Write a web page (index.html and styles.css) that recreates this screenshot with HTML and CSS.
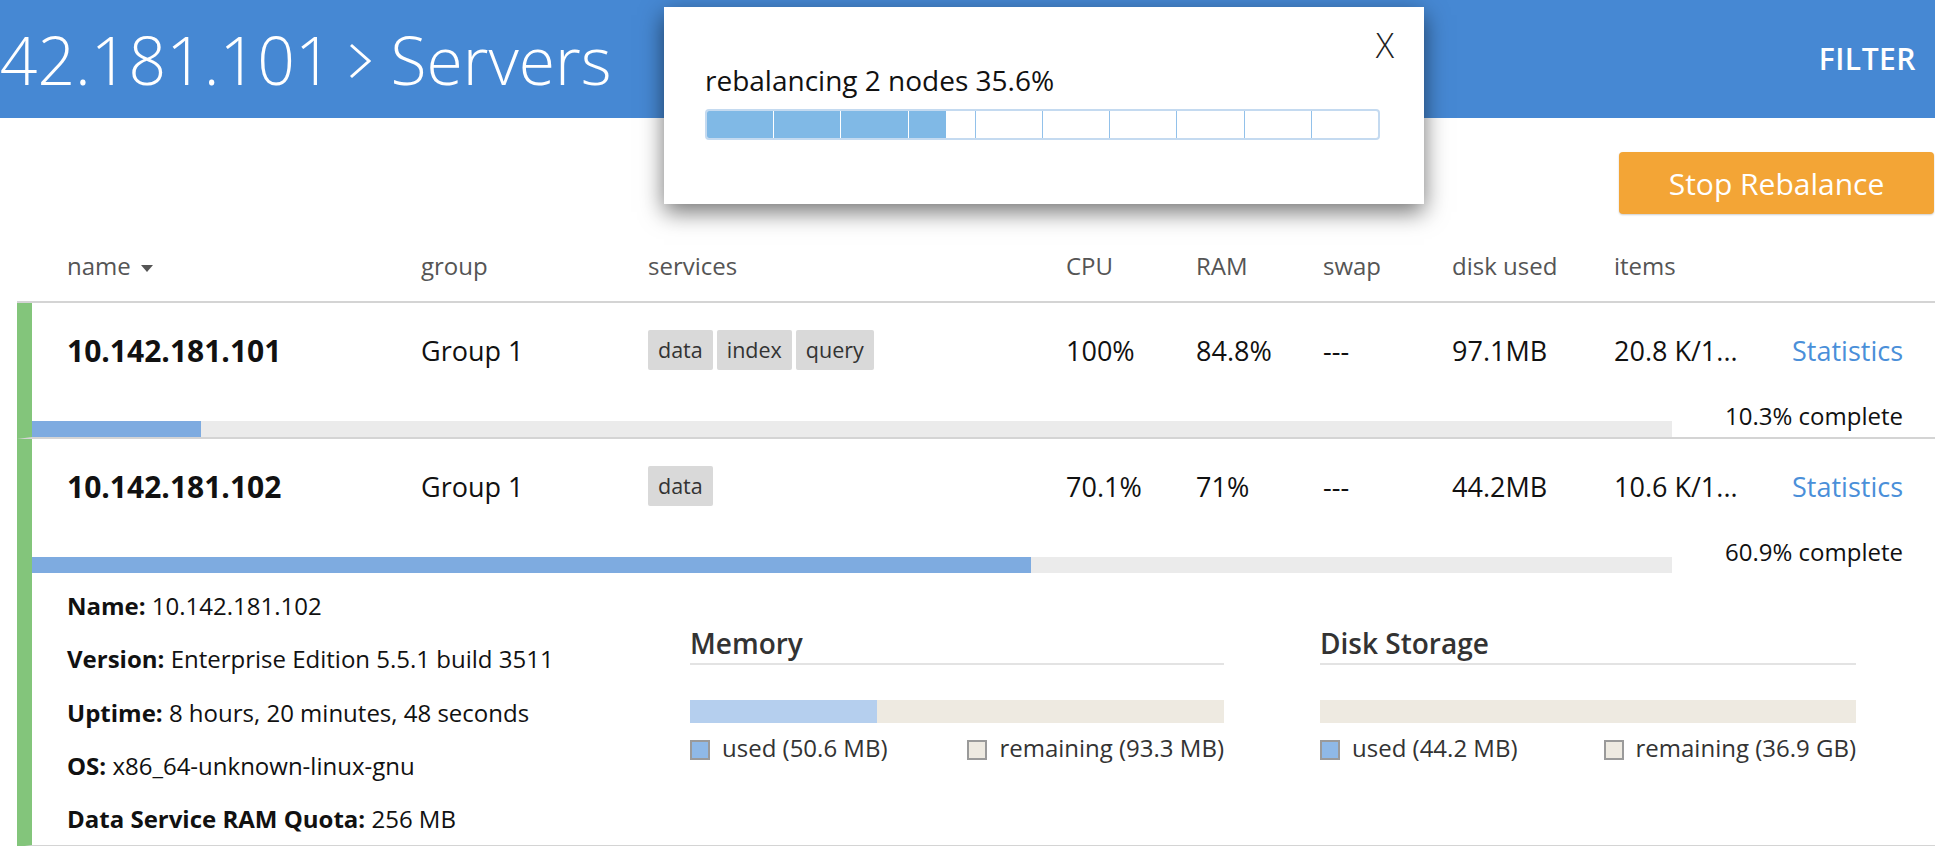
FILE: index.html
```html
<!DOCTYPE html>
<html lang="en">
<head>
<meta charset="utf-8">
<title>Servers</title>
<link rel="stylesheet" href="styles.css">
</head>
<body>
<header class="topbar">
  <h1 class="title">10.142.181.101<svg class="chev" width="22" height="36" viewBox="0 0 22 36"><polyline points="2,2 20,18 2,34" fill="none" stroke="#fff" stroke-width="3"/></svg>Servers</h1>
  <a class="filter">FILTER</a>
</header>

<div class="modal">
  <div class="modal-close">X</div>
  <div class="modal-msg">rebalancing 2 nodes 35.6%</div>
  <div class="seg-bar">
    <div class="seg full"></div>
    <div class="seg full"></div>
    <div class="seg full"></div>
    <div class="seg part" style="background:linear-gradient(90deg,#80b9e6 56%,#ffffff 56%)"></div>
    <div class="seg"></div>
    <div class="seg"></div>
    <div class="seg"></div>
    <div class="seg"></div>
    <div class="seg"></div>
    <div class="seg"></div>
  </div>
</div>

<main class="content">
  <div class="toolbar">
    <button class="btn-stop">Stop Rebalance</button>
  </div>

  <div class="thead cols">
    <div class="th">name <svg class="sort" width="12" height="7" viewBox="0 0 12 7"><polygon points="0,0 12,0 6,7" fill="#555"/></svg></div>
    <div class="th">group</div>
    <div class="th">services</div>
    <div class="th">CPU</div>
    <div class="th">RAM</div>
    <div class="th">swap</div>
    <div class="th">disk used</div>
    <div class="th">items</div>
    <div class="th"></div>
  </div>

  <div class="row">
    <div class="row-main cols">
      <div class="name">10.142.181.101</div>
      <div>Group 1</div>
      <div class="chips"><span class="chip">data</span><span class="chip">index</span><span class="chip">query</span></div>
      <div>100%</div>
      <div>84.8%</div>
      <div>---</div>
      <div>97.1MB</div>
      <div>20.8 K/1...</div>
      <div class="stat-link">Statistics</div>
    </div>
    <div class="progress">
      <div class="track"><div class="fill" style="width:10.3%"></div></div>
      <div class="pct">10.3% complete</div>
    </div>
  </div>

  <div class="row">
    <div class="row-main cols">
      <div class="name">10.142.181.102</div>
      <div>Group 1</div>
      <div class="chips"><span class="chip">data</span></div>
      <div>70.1%</div>
      <div>71%</div>
      <div>---</div>
      <div>44.2MB</div>
      <div>10.6 K/1...</div>
      <div class="stat-link">Statistics</div>
    </div>
    <div class="progress">
      <div class="track"><div class="fill" style="width:60.9%"></div></div>
      <div class="pct">60.9% complete</div>
    </div>
    <div class="details">
      <div class="info">
        <p><b>Name:</b> 10.142.181.102</p>
        <p><b>Version:</b> Enterprise Edition 5.5.1 build 3511</p>
        <p><b>Uptime:</b> 8 hours, 20 minutes, 48 seconds</p>
        <p><b>OS:</b> x86_64-unknown-linux-gnu</p>
        <p><b>Data Service RAM Quota:</b> 256 MB</p>
      </div>
      <div class="panel">
        <h3>Memory</h3>
        <div class="meter"><div class="meter-used" style="width:35.1%"></div></div>
        <div class="legend">
          <span><i class="sw sw-used"></i>used (50.6 MB)</span>
          <span><i class="sw sw-rem"></i>remaining (93.3 MB)</span>
        </div>
      </div>
      <div class="panel">
        <h3>Disk Storage</h3>
        <div class="meter"><div class="meter-used" style="width:0%"></div></div>
        <div class="legend">
          <span><i class="sw sw-used"></i>used (44.2 MB)</span>
          <span><i class="sw sw-rem"></i>remaining (36.9 GB)</span>
        </div>
      </div>
    </div>
  </div>
</main>
</body>
</html>
```

FILE: styles.css
```css
* { box-sizing: border-box; }
html, body { margin: 0; padding: 0; }
body {
  font-family: "Open Sans", "Liberation Sans", sans-serif;
  color: #111;
  background: #fff;
  width: 1935px;
  height: 846px;
  overflow: hidden;
  position: relative;
}

.topbar {
  height: 118px;
  background: #4688d3;
  display: flex;
  align-items: center;
  justify-content: space-between;
  overflow: hidden;
  color: #fff;
}
.title {
  margin: 0 0 0 -129px;
  font-size: 66px;
  font-weight: 300;
  line-height: 64px;
  white-space: nowrap;
  display: flex;
  align-items: center;
}
.chev {
  margin: 4px 20px 0 16px;
}
.filter {
  font-size: 30px;
  font-weight: 600;
  line-height: 30px;
  margin-right: 19px;
  letter-spacing: 0.5px;
}

.modal {
  position: absolute;
  left: 664px;
  top: 7px;
  width: 760px;
  height: 197px;
  background: #fff;
  box-shadow: 0 8px 22px rgba(0, 0, 0, 0.55);
  padding: 20px 30px 0 41px;
  z-index: 5;
}
.modal-close {
  text-align: right;
  font-size: 34px;
  font-weight: 300;
  line-height: 36px;
  color: #222;
}
.modal-msg {
  font-size: 28px;
  line-height: 38px;
  color: #111;
  margin-top: -2px;
}
.seg-bar {
  margin-top: 10px;
  margin-right: 14px;
  height: 31px;
  border: 2px solid #c4daf0;
  border-radius: 4px;
  display: flex;
  overflow: hidden;
}
.seg { flex: 1; border-right: 1px solid #92c1ea; }
.seg:last-child { border-right: 0; }
.seg.full { background: #80b9e6; border-right-color: #fff; }

.content { padding-left: 17px; }
.toolbar {
  display: flex;
  justify-content: flex-end;
  padding-top: 34px;
  padding-right: 1px;
}
.btn-stop {
  height: 62px;
  width: 315px;
  background: #f3a536;
  color: #fff;
  border: 0;
  border-radius: 4px;
  font-family: inherit;
  font-size: 30px;
  font-weight: 400;
  box-shadow: 0 1px 2px rgba(0, 0, 0, 0.2);
}

.cols {
  display: grid;
  grid-template-columns: 354px 227px 418px 130px 127px 129px 162px 176px auto;
  align-items: center;
}
.thead {
  padding: 35px 32px 18px 50px;
  line-height: 34px;
  font-size: 24px;
  color: #555;
  border-bottom: 2px solid #d4d4d4;
}
.th { white-space: nowrap; }
.sort { margin-left: 4px; vertical-align: 3px; }

.row {
  border-left: 15px solid #83c57b;
  border-bottom: 2px solid #d4d4d4;
}
.row-main {
  height: 94px;
  padding: 0 32px 0 35px;
  font-size: 27px;
  white-space: nowrap;
}
.name { font-weight: 700; font-size: 30px; }
.chips { display: flex; gap: 4px; }
.chip {
  background: #d9d9d9;
  height: 40px;
  line-height: 40px;
  padding: 0 10px;
  font-size: 21.5px;
  color: #333;
  border-radius: 2px;
}
.stat-link { color: #4a8fd9; text-align: right; }

.progress {
  display: flex;
  align-items: flex-end;
  height: 40px;
}
.track { flex: 1; height: 16px; background: #ebebeb; }
.fill { height: 100%; background: #7eabe0; }
.pct {
  width: 263px;
  text-align: right;
  padding: 0 32px 5px 0;
  font-size: 24px;
  line-height: 32px;
}

.details {
  display: grid;
  grid-template-columns: 527px 534px 536px;
  column-gap: 96px;
  padding: 6px 0 0 35px;
}
.info p {
  margin: 0;
  font-size: 24px;
  line-height: 53.25px;
  white-space: nowrap;
}
.info b { font-weight: 700; }
.panel { padding-top: 44px; }
.panel h3 {
  margin: 0;
  font-size: 28px;
  font-weight: 600;
  line-height: 40px;
  color: #333;
  border-bottom: 2px solid #e3e3e3;
}
.meter {
  margin-top: 35px;
  height: 23px;
  background: #eeeae1;
  display: flex;
}
.meter-used { background: #b5cfee; }
.legend {
  display: flex;
  justify-content: space-between;
  margin-top: 9px;
  font-size: 24px;
  line-height: 32px;
  color: #333;
  white-space: nowrap;
}
.sw {
  display: inline-block;
  width: 20px;
  height: 20px;
  border: 2px solid #9a9a9a;
  vertical-align: -3px;
  margin-right: 12px;
}
.sw-used { background: #8fb9e7; }
.sw-rem { background: #eeeae1; }
```
